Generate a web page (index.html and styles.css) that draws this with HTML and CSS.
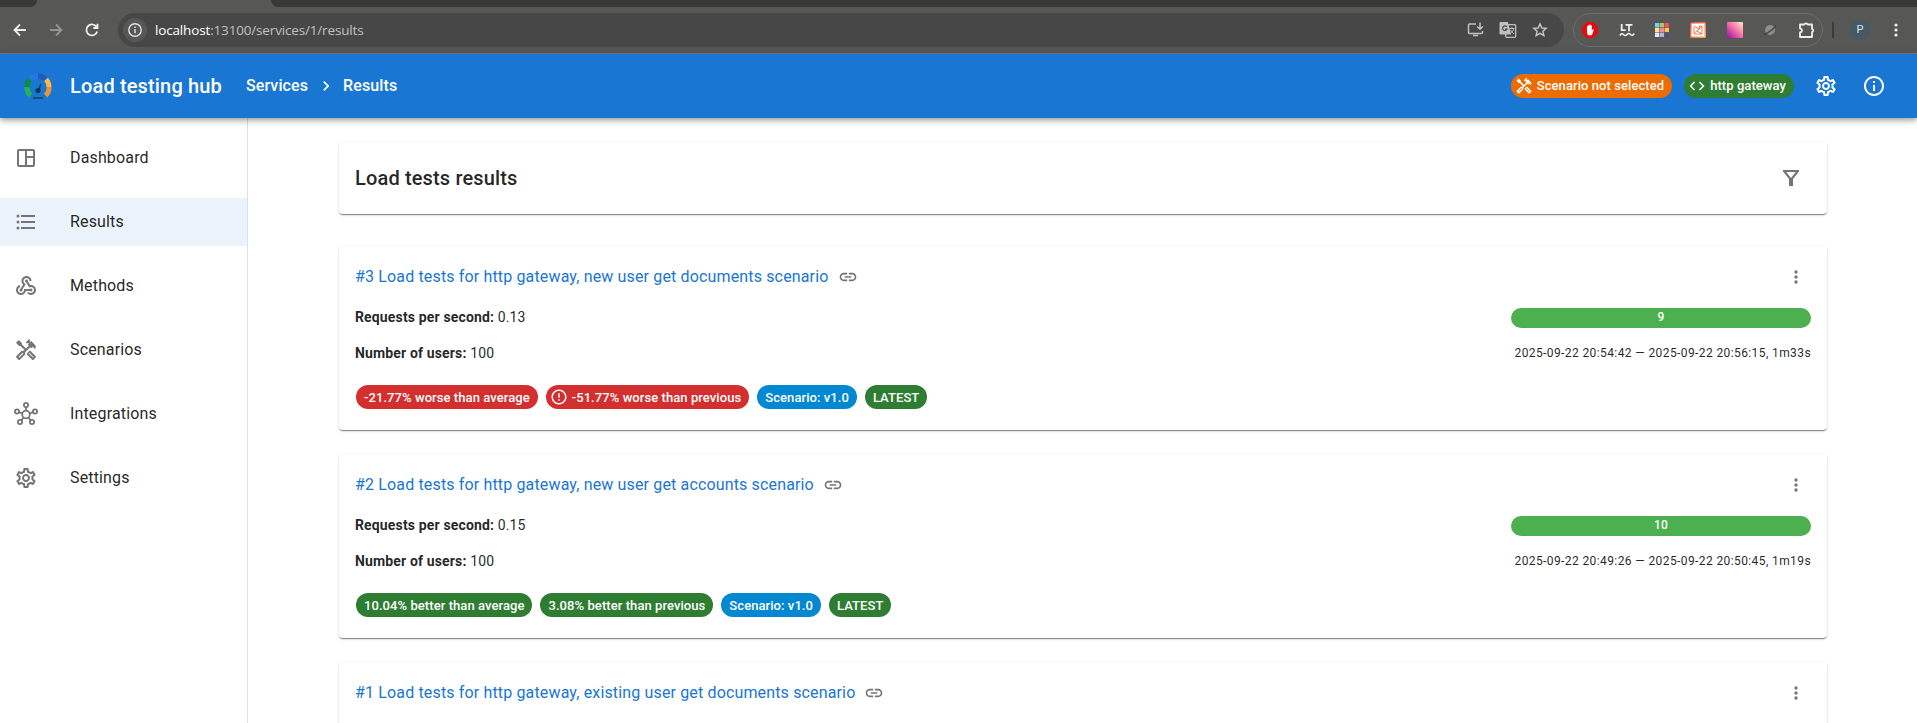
FILE: index.html
```html
<!DOCTYPE html>
<html lang="en">
<head>
<meta charset="utf-8">
<title>Load testing hub</title>
<link rel="stylesheet" href="styles.css">
</head>
<body>
<svg class="defs" aria-hidden="true">
  <symbol id="settings" viewBox="0 0 24 24"><path d="M19.43 12.98c.04-.32.07-.64.07-.98s-.03-.66-.07-.98l2.11-1.65c.19-.15.24-.42.12-.64l-2-3.46c-.09-.16-.26-.25-.44-.25-.06 0-.12.01-.17.03l-2.49 1c-.52-.4-1.08-.73-1.69-.98l-.38-2.65C14.46 2.18 14.25 2 14 2h-4c-.25 0-.46.18-.49.42l-.38 2.65c-.61.25-1.17.59-1.69.98l-2.49-1c-.06-.02-.12-.03-.18-.03-.17 0-.34.09-.43.25l-2 3.46c-.13.22-.07.49.12.64l2.11 1.65c-.04.32-.07.65-.07.98s.03.66.07.98l-2.11 1.65c-.19.15-.24.42-.12.64l2 3.46c.09.16.26.25.44.25.06 0 .12-.01.17-.03l2.49-1c.52.4 1.08.73 1.69.98l.38 2.65c.03.24.24.42.49.42h4c.25 0 .46-.18.49-.42l.38-2.65c.61-.25 1.17-.59 1.69-.98l2.49 1c.06.02.12.03.18.03.17 0 .34-.09.43-.25l2-3.46c.12-.22.07-.49-.12-.64zm-1.98-1.71c.04.31.05.52.05.73s-.02.43-.05.73l-.14 1.13.89.7 1.08.84-.7 1.21-1.27-.51-1.04-.42-.9.68c-.43.32-.84.56-1.25.73l-1.06.43-.16 1.13-.2 1.35h-1.4l-.19-1.35-.16-1.13-1.06-.43c-.43-.18-.83-.41-1.23-.71l-.91-.7-1.06.43-1.27.51-.7-1.21 1.08-.84.89-.7-.14-1.13c-.03-.31-.05-.54-.05-.74s.02-.43.05-.73l.14-1.13-.89-.7-1.08-.84.7-1.21 1.27.51 1.04.42.9-.68c.43-.32.84-.56 1.25-.73l1.06-.43.16-1.13.2-1.35h1.39l.19 1.35.16 1.13 1.06.43c.43.18.83.41 1.23.71l.91.7 1.06-.43 1.27-.51.7 1.21-1.07.85-.89.7zM12 8c-2.21 0-4 1.79-4 4s1.79 4 4 4 4-1.79 4-4-1.79-4-4-4m0 6c-1.1 0-2-.9-2-2s.9-2 2-2 2 .9 2 2-.9 2-2 2"/></symbol>
  <symbol id="tools" viewBox="0 0 24 24"><path d="m21.67 18.17-5.3-5.3h-.99l-2.54 2.54v.99l5.3 5.3c.39.39 1.02.39 1.41 0l2.12-2.12c.39-.38.39-1.02 0-1.41m-2.83 1.42-4.24-4.24.71-.71 4.24 4.24z"/><path d="m17.34 10.19 1.41-1.41 2.12 2.12c1.17-1.17 1.17-3.07 0-4.24l-3.54-3.54-1.41 1.41V1.71L15.22 1l-3.54 3.54.71.71h2.83l-1.41 1.41 1.06 1.06-2.89 2.89-4.13-4.13V5.06L4.83 2.04 2 4.87 5 7.89h1.41l4.13 4.13-.85.85H7.6l-5.3 5.3c-.39.39-.39 1.02 0 1.41l2.12 2.12c.39.39 1.02.39 1.41 0l5.3-5.3v-2.12l5.15-5.15zm-7.98 5.34-4.24 4.24-.71-.71 4.24-4.24.71.71z"/></symbol>
  <symbol id="link" viewBox="0 0 24 24"><path d="M3.9 12c0-1.71 1.39-3.1 3.1-3.1h4V7H7c-2.76 0-5 2.24-5 5s2.24 5 5 5h4v-1.9H7c-1.71 0-3.1-1.39-3.1-3.1M8 13h8v-2H8zm9-6h-4v1.9h4c1.71 0 3.1 1.39 3.1 3.1s-1.39 3.1-3.1 3.1h-4V17h4c2.76 0 5-2.24 5-5s-2.24-5-5-5"/></symbol>
  <symbol id="more" viewBox="0 0 24 24"><circle cx="12" cy="6" r="2"/><circle cx="12" cy="12" r="2"/><circle cx="12" cy="18" r="2"/></symbol>
</svg>

<div class="browser">
  <div class="tabs"><div class="tab-left"></div><div class="tab-right"></div></div>
  <div class="toolbar">
    <div class="nav-buttons">
      <svg width="16" height="16" viewBox="0 0 16 16" class="line"><path d="M14 8H3M8 2.5 2.5 8 8 13.5"/></svg>
      <svg width="16" height="16" viewBox="0 0 16 16" class="line dim"><path d="M2 8h11M8 2.5 13.500 8 8 13.500"/></svg>
      <svg width="16" height="16" viewBox="0 0 16 16" class="line"><path d="M13.200 9.500A5.500 5.500 0 1 1 12.300 4.600L13.500 5.800M13.500 1.800v4.200H9.300"/></svg>
    </div>
    <div class="omnibox">
      <span class="site-info"><svg width="14" height="14" viewBox="0 0 14 14"><circle cx="7" cy="7" r="6.200" fill="none" stroke="#e3e3e3" stroke-width="1.400"/><path d="M6.300 6h1.400v4.200H6.300zM6.300 3.600h1.400V5H6.300z" fill="#e3e3e3"/></svg></span>
      <span class="url"><b>localhost</b>:13100/services/1/results</span>
      <div class="omni-actions">
        <svg width="17" height="16" viewBox="0 0 17 16" class="line grey"><path d="M9 2H2.500a1 1 0 0 0-1 1v7.500a1 1 0 0 0 1 1h12a1 1 0 0 0 1-1V9M13 .5v6.500M10.200 4.500 13 7.300l2.800-2.800M6 13.500h5"/></svg>
        <svg width="18" height="18" viewBox="0 0 18 18"><rect x="6.700" y="3.700" width="10" height="12.600" rx="1" fill="none" stroke="#c0c0c0" stroke-width="1.300"/><path d="M1.500 1h7.300l3.400 12.500H1.500A1 1 0 0 1 .5 12.500V2a1 1 0 0 1 1-1" fill="#c0c0c0"/><path d="M7.800 5.800a2.300 2.300 0 1 0 .3 2.300H6" fill="none" stroke="#474747" stroke-width="1.200"/><path d="M10.500 7.500h5M13 6v1.500M15 7.500c-.6 2-1.700 3.200-3 4.200M11.500 9l3.500 4" fill="none" stroke="#c0c0c0"/></svg>
        <svg width="16" height="16" viewBox="0 0 16 16"><path d="m8 1.900 1.850 4.100 4.350.4-3.300 2.900 1 4.300L8 11.400l-3.900 2.200 1-4.300L1.800 6.400 6.150 6z" fill="none" stroke="#c7c7c7" stroke-width="1.400"/></svg>
      </div>
    </div>
    <div class="extensions">
      <svg width="16" height="16" viewBox="0 0 16 16"><path d="M4.700 0h6.600L16 4.700v6.600L11.300 16H4.700L0 11.300V4.700z" fill="#e40d0d"/><path d="M5 8V4.500q.6-.8 1.100 0V3.300q.7-.8 1.200 0V2.700q.7-.8 1.300 0v.8q.7-.7 1.200 0v5q1.200-1.600 2-1.100L10.400 12q-.7 1.500-2.500 1.500Q5 13.500 5 10z" fill="#fff"/></svg>
      <svg width="16" height="16" viewBox="0 0 16 16" fill="none" stroke="#eee" stroke-width="1.800"><path d="M2.700 2v6.200h4M6.500 2.900h7M10 3v6.200"/><path d="M.8 13.500q1.800-3 3.600-1t3.600 0q1.800-2 3.600 0t3.600-1" stroke-width="1.600"/></svg>
      <svg width="14" height="14" viewBox="0 0 14 14"><path fill="#76d2e8" d="M0 0h4.300v4.300H0z"/><path fill="#a9ca5b" d="M4.800 0h4.300v4.300H4.800z"/><path fill="#fb4c62" d="M9.600 0H14v4.300H9.600z"/><path fill="#ffe289" d="M0 4.800h4.300v4.300H0z"/><path fill="#f282b0" d="M4.800 4.800h4.300v4.300H4.800z"/><path fill="#ffc54d" d="M9.600 4.800H14v4.300H9.600z"/><path fill="#e5e5ef" d="M0 9.600h4.300V14H0z"/><path fill="#b4b5dc" d="M4.800 9.600h4.300V14H4.800z"/><path fill="#42537e" d="M9.600 9.600H14V14H9.600z"/></svg>
      <svg width="16" height="16" viewBox="0 0 16 16"><defs><linearGradient id="or" x2="1" y2="1"><stop stop-color="#e9433f"/><stop offset="1" stop-color="#f6b052"/></linearGradient></defs><rect width="16" height="16" rx="1.500" fill="url(#or)"/><rect x="1.500" y="1.500" width="13" height="13" fill="#fff"/><path d="M4 4.500v7.500h8V4H9.500v3L4.500 4.500M4.500 11 12 4.500M7 9l5 3" stroke="#ef6a4c" stroke-width=".9" fill="none"/></svg>
      <svg width="16" height="16" viewBox="0 0 16 16"><defs><linearGradient id="pk" x1="0" y1="1" x2="1" y2="0"><stop stop-color="#8e159e"/><stop offset=".5" stop-color="#f56aa8"/><stop offset="1" stop-color="#fff0c8"/></linearGradient></defs><rect width="16" height="16" rx="1" fill="url(#pk)"/></svg>
      <svg width="14" height="14" viewBox="0 0 14 14"><circle cx="7" cy="7" r="5" fill="#8d8d8d"/><path d="M.8 11.500Q6 10 13.200 3" fill="none" stroke="#454545" stroke-width="1.300"/></svg>
      <svg width="18" height="18" viewBox="0 0 18 18"><path d="M2 3.500h4.300a1.800 1.800 0 0 1 3.400 0H14v4.300a1.800 1.800 0 0 1 0 3.400V16H2v-4.600q2-.4 2-2t-2-2z" fill="none" stroke="#eee" stroke-width="1.800" stroke-linejoin="round"/></svg>
    </div>
    <span class="divider"></span>
    <span class="avatar">P</span>
    <svg class="chrome-menu" width="16" height="16" viewBox="0 0 16 16" fill="#eee"><circle cx="8" cy="3" r="1.600"/><circle cx="8" cy="8" r="1.600"/><circle cx="8" cy="13" r="1.600"/></svg>
  </div>
</div>

<header class="appbar">
  <svg class="logo" width="28" height="28" viewBox="0 0 28 28"><g fill="none" stroke-width="5"><path d="M6.400 22.600A11 11 0 0 1 3 14" stroke="#27b34e"/><path d="M3 14a11 11 0 0 1 3-7.600" stroke="#108a3c"/><path d="M6 6.400A11 11 0 0 1 14 3" stroke="#2478e6"/><path d="M14 3a11 11 0 0 1 8 3.400" stroke="#175db9"/><path d="M22 6.400A11 11 0 0 1 25 14" stroke="#fdba45"/><path d="M25 14a11 11 0 0 1-3.400 8.600" stroke="#e8943a"/></g><path d="m14 18 3-7" stroke="#124259" stroke-width="1.500"/><circle cx="14" cy="17.500" r="2.500" fill="#0c3549"/><path d="M9 24h10v2H9z" fill="#15516f"/></svg>
  <h1>Load testing hub</h1>
  <nav class="crumbs"><span>Services</span><svg width="20" height="20" viewBox="0 0 24 24" fill="#fff"><path d="M10 6 8.590 7.410 13.170 12l-4.580 4.590L10 18l6-6z"/></svg><span>Results</span></nav>
  <div class="bar-actions">
    <span class="chip warning icon-chip"><svg width="18" height="18"><use href="#tools"/></svg>Scenario not selected</span>
    <span class="chip success icon-chip"><svg width="18" height="18" viewBox="0 0 24 24"><path d="M9.400 16.600 4.800 12l4.600-4.600L8 6l-6 6 6 6zm5.200 0 4.600-4.600-4.600-4.600L16 6l6 6-6 6z"/></svg>http gateway</span>
    <svg class="bar-icon" width="24" height="24"><use href="#settings"/></svg>
    <svg class="bar-icon" width="24" height="24" viewBox="0 0 24 24"><path d="M11 7h2v2h-2zm0 4h2v6h-2zm1-9C6.480 2 2 6.480 2 12s4.480 10 10 10 10-4.480 10-10S17.520 2 12 2m0 18c-4.410 0-8-3.590-8-8s3.590-8 8-8 8 3.590 8 8-3.590 8-8 8"/></svg>
  </div>
</header>

<div class="layout">
  <aside class="sidebar">
    <a class="item"><svg width="24" height="24" viewBox="0 0 24 24"><path d="M5 3h14a2 2 0 0 1 2 2v14a2 2 0 0 1-2 2H5a2 2 0 0 1-2-2V5a2 2 0 0 1 2-2m0 2v14h6V5zm8 0v5h6V5zm0 7v7h6v-7z" fill-rule="evenodd"/></svg>Dashboard</a>
    <a class="item active"><svg width="24" height="24" viewBox="0 0 24 24"><circle cx="4" cy="6" r="1.500"/><circle cx="4" cy="12" r="1.500"/><circle cx="4" cy="18" r="1.500"/><path d="M7 19h14v-2H7zm0-6h14v-2H7zm0-8v2h14V5z"/></svg>Results</a>
    <a class="item"><svg width="24" height="24" viewBox="0 0 24 24"><path d="M10 15h5.880c.27-.31.67-.5 1.120-.5.83 0 1.500.67 1.500 1.500s-.67 1.500-1.500 1.500c-.44 0-.84-.19-1.120-.5H11.900c-.46 2.280-2.480 4-4.900 4-2.760 0-5-2.240-5-5 0-2.420 1.720-4.440 4-4.900v2.070c-1.160.41-2 1.530-2 2.830 0 1.650 1.350 3 3 3s3-1.350 3-3zm2.500-11c1.650 0 3 1.350 3 3h2c0-2.760-2.240-5-5-5s-5 2.240-5 5c0 1.430.6 2.710 1.550 3.620l-2.350 3.900c-.68.14-1.200.75-1.200 1.480 0 .83.67 1.500 1.500 1.500s1.500-.67 1.500-1.500c0-.16-.02-.31-.07-.45l3.380-5.630C10.490 9.610 9.500 8.420 9.500 7c0-1.650 1.350-3 3-3m4.500 9c-.64 0-1.230.2-1.720.54l-3.050-5.070C11.530 8.350 11 7.740 11 7c0-.83.67-1.500 1.500-1.500S14 6.170 14 7c0 .15-.02.29-.06.43l2.190 3.650c.28-.05.57-.08.87-.08 2.760 0 5 2.240 5 5s-2.240 5-5 5c-1.850 0-3.470-1.010-4.330-2.500h2.670c.48.32 1.050.5 1.660.5 1.650 0 3-1.350 3-3s-1.350-3-3-3"/></svg>Methods</a>
    <a class="item"><svg width="24" height="24"><use href="#tools"/></svg>Scenarios</a>
    <a class="item"><svg width="24" height="24" viewBox="0 0 24 24" class="hub"><circle cx="12" cy="12.500" r="3.800"/><circle cx="12" cy="3" r="2.100"/><circle cx="3" cy="9.500" r="2.100"/><circle cx="21" cy="9.500" r="2.100"/><circle cx="6" cy="20" r="2.100"/><circle cx="18" cy="20" r="2.100"/><path d="M12 5v4M5 10.200l3.400 1.100M19 10.200l-3.400 1.100M7.300 18.400l2.300-2.900M16.700 18.400l-2.300-2.900"/></svg>Integrations</a>
    <a class="item"><svg width="24" height="24"><use href="#settings"/></svg>Settings</a>
  </aside>

  <main class="content">
    <section class="card head-card">
      <h2>Load tests results</h2>
      <svg class="filter" width="24" height="24" viewBox="0 0 24 24"><path d="M4 4h16v1.500L14 13v7h-4v-7L4 5.500zm3.300 2L12 12 16.700 6z" fill-rule="evenodd"/></svg>
    </section>

    <section class="card result">
      <div class="title-row"><a>#3 Load tests for http gateway, new user get documents scenario</a><svg width="20" height="20"><use href="#link"/></svg><svg class="menu" width="20" height="20"><use href="#more"/></svg></div>
      <div class="stats">
        <div class="facts"><p><b>Requests per second:</b> 0.13</p><p><b>Number of users:</b> 100</p></div>
        <div class="run"><div class="bar">9</div><time>2025-09-22 20:54:42 — 2025-09-22 20:56:15, 1m33s</time></div>
      </div>
      <div class="chips"><span class="chip error">-21.77% worse than average</span><span class="chip error icon-chip"><svg width="18" height="18" viewBox="0 0 24 24"><path d="M11 15h2v2h-2zm0-8h2v6h-2zm1-5C6.470 2 2 6.500 2 12s4.480 10 10 10 10-4.480 10-10S17.520 2 12 2m0 18c-4.410 0-8-3.590-8-8s3.590-8 8-8 8 3.590 8 8-3.590 8-8 8"/></svg>-51.77% worse than previous</span><span class="chip info">Scenario: v1.0</span><span class="chip success">LATEST</span></div>
    </section>

    <section class="card result">
      <div class="title-row"><a>#2 Load tests for http gateway, new user get accounts scenario</a><svg width="20" height="20"><use href="#link"/></svg><svg class="menu" width="20" height="20"><use href="#more"/></svg></div>
      <div class="stats">
        <div class="facts"><p><b>Requests per second:</b> 0.15</p><p><b>Number of users:</b> 100</p></div>
        <div class="run"><div class="bar">10</div><time>2025-09-22 20:49:26 — 2025-09-22 20:50:45, 1m19s</time></div>
      </div>
      <div class="chips"><span class="chip success">10.04% better than average</span><span class="chip success">3.08% better than previous</span><span class="chip info">Scenario: v1.0</span><span class="chip success">LATEST</span></div>
    </section>

    <section class="card result">
      <div class="title-row"><a>#1 Load tests for http gateway, existing user get documents scenario</a><svg width="20" height="20"><use href="#link"/></svg><svg class="menu" width="20" height="20"><use href="#more"/></svg></div>
    </section>
  </main>
</div>
</body>
</html>
```

FILE: styles.css
```css
* { box-sizing: border-box; }
body { margin: 0; height: 723px; overflow: hidden; display: flex; flex-direction: column; background: #fff; color: rgba(0, 0, 0, .87); font-family: Roboto, sans-serif; font-size: 16px; }
h1, h2, p { margin: 0; }
svg { flex: none; display: block; }
.defs { position: absolute; width: 0; height: 0; }

/* Browser chrome */
.browser { flex: none; height: 54px; background: #575755; border-bottom: 1px solid #777; }
.tabs { height: 7px; display: flex; justify-content: space-between; }
.tab-left { width: 37px; background: #383836; border-bottom-right-radius: 9px; }
.tab-right { width: 1646px; background: #383836; border-bottom-left-radius: 9px; }
.toolbar { height: 46px; display: flex; align-items: center; }
.nav-buttons { width: 118px; padding-left: 12px; display: flex; gap: 20px; }
.line { fill: none; stroke: #eee; stroke-width: 1.8; }
.line.dim { stroke: #949494; }
.line.grey { stroke: #c0c0c0; stroke-width: 1.5; }
.omnibox { width: 1446px; height: 34px; border-radius: 17px; background: #474747; display: flex; align-items: center; padding: 0 16px 0 5px; }
.site-info { width: 24px; height: 24px; border-radius: 50%; background: #575757; display: flex; align-items: center; justify-content: center; }
.url { margin-left: 8px; color: #c0c0c0; font: 13.5px "Open Sans", sans-serif; letter-spacing: -.16px; }
.url b { color: #fff; font-weight: 400; }
.omni-actions { margin-left: auto; display: flex; align-items: center; gap: 15px; }
.extensions { margin-left: 9px; width: 250px; height: 34px; border: 1px solid #6c6c6c; border-radius: 17px; display: flex; align-items: center; justify-content: space-between; padding: 0 6px 0 8px; }
.divider { width: 2px; height: 16px; margin-left: 9px; background: #3b3b3a; }
.avatar { width: 20px; height: 20px; margin-left: 16px; border-radius: 50%; background: #455a64; color: #dfe6ea; font-size: 11px; line-height: 20px; text-align: center; }
.chrome-menu { margin-left: 18px; }

/* App bar */
.appbar { flex: none; position: relative; z-index: 1; height: 64px; padding: 0 31px 0 24px; display: flex; align-items: center; background: #1976d2; color: #fff; box-shadow: 0 2px 4px -1px rgba(0,0,0,.2), 0 4px 5px rgba(0,0,0,.14), 0 1px 10px rgba(0,0,0,.12); }
.logo { margin-top: 2px; }
h1 { margin-left: 18px; font-size: 20px; font-weight: 500; letter-spacing: .15px; }
.crumbs { margin-left: 24px; padding-bottom: 2px; display: flex; align-items: center; gap: 7.5px; font-weight: 500; letter-spacing: .12px; }
.crumbs svg { margin-top: 2px; }
.bar-actions { margin-left: auto; display: flex; align-items: center; }
.bar-actions .chip { padding-bottom: 1px; }
.bar-actions .chip svg { margin-top: 1px; }
.bar-actions .chip + .chip { margin-left: 12px; }
.bar-icon { fill: #fff; margin-left: 20px; }
.bar-icon + .bar-icon { margin-left: 24px; }

.chip { height: 24px; padding: 0 8px; border-radius: 12px; display: inline-flex; align-items: center; color: #fff; font-size: 13px; font-weight: 500; letter-spacing: .07px; white-space: nowrap; }
.icon-chip { padding-left: 4px; gap: 4px; }
.chip svg { fill: #fff; }
.warning { background: #ed6c02; }
.success { background: #2e7d32; }
.error { background: #d32f2f; }
.info { background: #0288d1; }

/* Page */
.layout { flex: 1; min-height: 0; display: flex; }
.sidebar { width: 248px; padding-top: 16px; border-right: 1px solid #e0e0e0; display: flex; flex-direction: column; gap: 16px; }
.item { height: 48px; padding: 0 0 2px 14px; display: flex; align-items: center; gap: 32px; letter-spacing: .15px; }
.item svg { margin-top: 2px; fill: #757575; }
.item .hub { fill: none; stroke: #757575; stroke-width: 1.8; overflow: visible; }
.active { background: #ebf3fc; }
.content { flex: 1; padding: 24px 90px 0 91px; overflow: hidden; }
.card { border-radius: 4px; background: #fff; box-shadow: 0 2px 1px -1px rgba(0,0,0,.3), 0 1px 1px rgba(0,0,0,.18), 0 1px 3px rgba(0,0,0,.16); }
.head-card { height: 72px; margin-bottom: 32px; padding: 0 24px 0 16px; display: flex; align-items: center; justify-content: space-between; }
h2 { font-size: 20px; font-weight: 500; letter-spacing: .15px; }
.filter { fill: #757575; }
.result { height: 184px; margin-bottom: 24px; padding: 16px; }
.title-row { height: 30px; display: flex; align-items: center; gap: 9px; padding: 0 5px 2px 0; }
.title-row a { color: #1976d2; letter-spacing: .15px; }
.title-row svg { margin-top: 2px; fill: #757575; }
.title-row .menu { margin-left: auto; }
.stats { height: 93px; padding-top: 14px; display: flex; justify-content: space-between; font-size: 14px; letter-spacing: .15px; }
.facts p { height: 22px; line-height: 22px; margin-bottom: 14px; }
.facts b { font-weight: 700; }
.run { width: 300px; padding-top: 2px; text-align: right; font-size: 12px; }
.bar { height: 20px; border-radius: 10px; background: #4caf50; color: #fff; font-weight: 500; text-align: center; line-height: 18px; }
.run time { display: block; margin-top: 15px; line-height: 20px; letter-spacing: .4px; white-space: nowrap; }
.chips { display: flex; gap: 8px; padding-left: 1px; }
```
